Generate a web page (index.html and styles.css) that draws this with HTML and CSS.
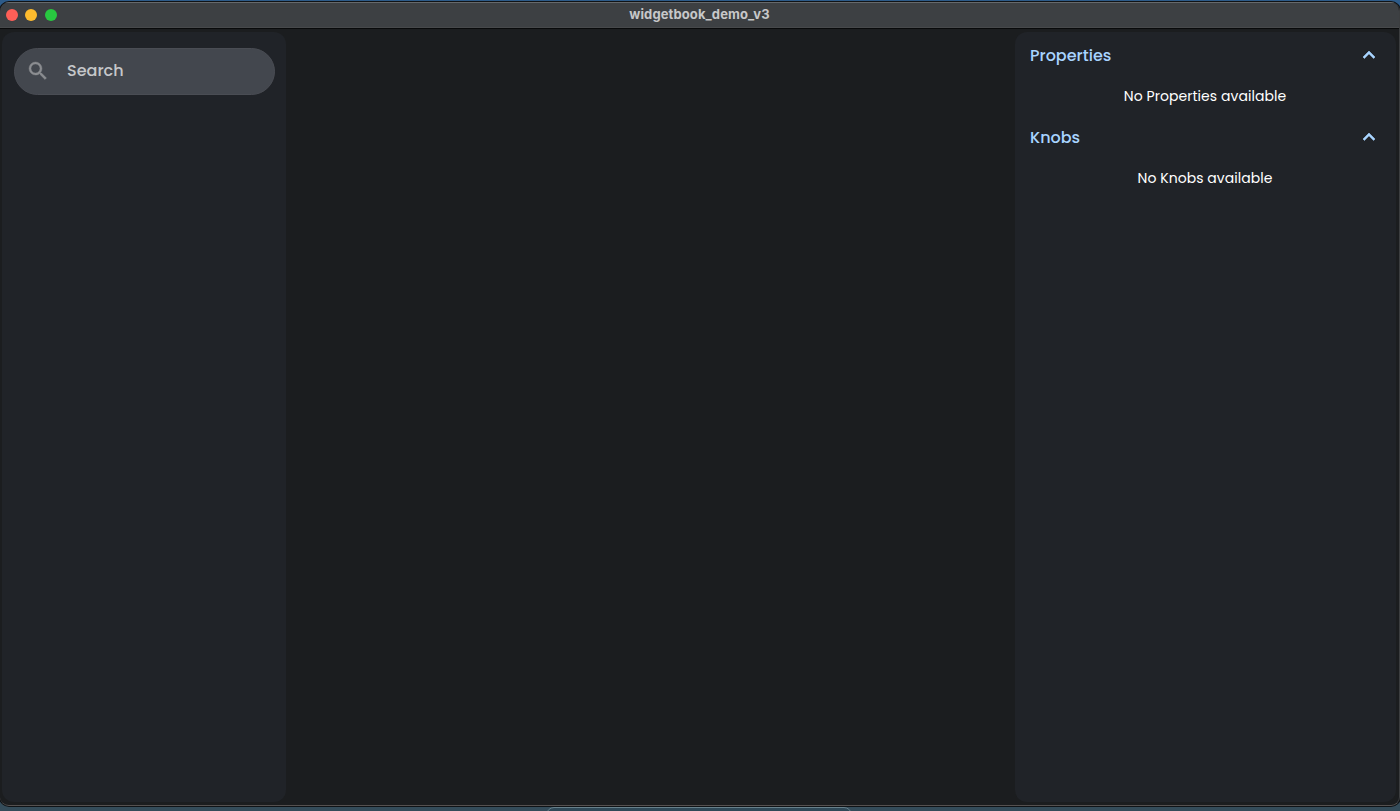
FILE: index.html
```html
<!DOCTYPE html>
<html lang="en">
<head>
  <meta charset="UTF-8">
  <meta name="viewport" content="width=device-width, initial-scale=1.0">
  <title>widgetbook_demo_v3</title>
  <link rel="stylesheet" href="styles.css">
</head>
<body>
  <div class="window">
    <header class="titlebar">
      <div class="lights">
        <span class="light red"></span>
        <span class="light yellow"></span>
        <span class="light green"></span>
      </div>
      <span class="title">widgetbook_demo_v3</span>
    </header>

    <main class="content">
      <aside class="panel navigation">
        <label class="search">
          <svg class="search-icon" viewBox="0 0 24 24">
            <path d="M15.5 14h-.79l-.28-.27A6.47 6.47 0 0 0 16 9.5 6.5 6.5 0 1 0 9.5 16c1.61 0 3.09-.59 4.23-1.57l.27.28v.79l5 4.99L20.49 19l-4.99-5zm-6 0C7.01 14 5 11.99 5 9.5S7.01 5 9.5 5 14 7.01 14 9.5 11.99 14 9.5 14z"/>
          </svg>
          <span class="search-text">Search</span>
        </label>
      </aside>

      <section class="workbench"></section>

      <aside class="panel settings">
        <div class="group">
          <div class="group-header">
            <h2>Properties</h2>
            <svg class="chevron" viewBox="0 0 24 24"><path d="M12 8l-6 6 1.41 1.41L12 10.83l4.59 4.58L18 14z"/></svg>
          </div>
          <p>No Properties available</p>
        </div>
        <div class="group">
          <div class="group-header">
            <h2>Knobs</h2>
            <svg class="chevron" viewBox="0 0 24 24"><path d="M12 8l-6 6 1.41 1.41L12 10.83l4.59 4.58L18 14z"/></svg>
          </div>
          <p>No Knobs available</p>
        </div>
      </aside>
    </main>
  </div>
  <div class="dock"></div>
</body>
</html>
```
FILE: styles.css
```css
* {
  box-sizing: border-box;
}

body {
  margin: 0;
  height: 811px;
  padding-top: 2px;
  overflow: hidden;
  position: relative;
  background: linear-gradient(#2d5b89 0, #2d5b89 10px, #344c5a 800px);
  font-family: Poppins, Inter, sans-serif;
}

.window {
  height: 804px;
  display: flex;
  flex-direction: column;
  overflow: hidden;
  background-color: #1b1d1f;
  border-radius: 9px;
  border-right: 1px solid #3c3e40;
  border-bottom: 1px solid #555150;
  box-shadow: 0 0 0 1px #101316;
}

.titlebar {
  height: 26px;
  flex: none;
  display: grid;
  grid-template-columns: 1fr auto 1fr;
  align-items: center;
  background-color: #3d4043;
  border-top: 1px solid #66696c;
  border-bottom: 1px solid #47494b;
  box-shadow: 0 1px 0 #090a0b;
}

.lights {
  display: flex;
  gap: 7.5px;
  padding: 0 0 1px 5.7px;
}

.light {
  width: 12px;
  height: 12px;
  border-radius: 50%;
}

.red {
  background-color: #ff5f57;
}

.yellow {
  background-color: #febc2e;
}

.green {
  background-color: #28c840;
}

.title {
  color: #c7c8c9;
  font-family: Inter, sans-serif;
  font-size: 13px;
  font-weight: 700;
  line-height: 16px;
  letter-spacing: 0.1px;
  padding-bottom: 3px;
}

.content {
  flex: 1;
  display: flex;
  padding: 4px 3px 3px 2px;
}

.panel {
  background-color: #202328;
  border-radius: 12px;
}

.navigation {
  width: 284px;
  padding: 15.5px 11.5px 0 11.5px;
}

.search {
  height: 47px;
  display: flex;
  align-items: center;
  padding: 0 0 1px 11.5px;
  background-color: #43474e;
  border: 1px solid #4a4d54;
  border-radius: 24px;
}

.search-icon {
  width: 24px;
  height: 24px;
  fill: #8b8d91;
  stroke: #8b8d91;
  stroke-width: 0.4;
}

.search-text {
  margin-left: 17px;
  color: #c6c7ca;
  font-size: 16px;
  font-weight: 500;
}

.workbench {
  flex: 1;
}

.settings {
  width: 381px;
  padding: 12px 15px 0 15px;
}

.group {
  height: 82px;
}

.group-header {
  height: 24px;
  display: flex;
  align-items: center;
  justify-content: space-between;
}

.group-header h2 {
  margin: 0;
  color: #a8d4ff;
  font-size: 16px;
  font-weight: 500;
  line-height: 24px;
}

.chevron {
  width: 24px;
  height: 24px;
  margin-bottom: 2px;
  fill: #a8d4ff;
  stroke: #a8d4ff;
  stroke-width: 0.6;
}

.group p {
  margin: 18px 1px 0 0;
  color: #fff;
  font-size: 14px;
  line-height: 20px;
  letter-spacing: 0.05px;
  text-align: center;
}

/* top edge of the dock, peeking out below the window */
.dock {
  position: absolute;
  left: 546px;
  top: 807px;
  width: 306px;
  height: 40px;
  background-color: #2f4958;
  border: 1px solid #66808b;
  border-radius: 8px;
}
```
